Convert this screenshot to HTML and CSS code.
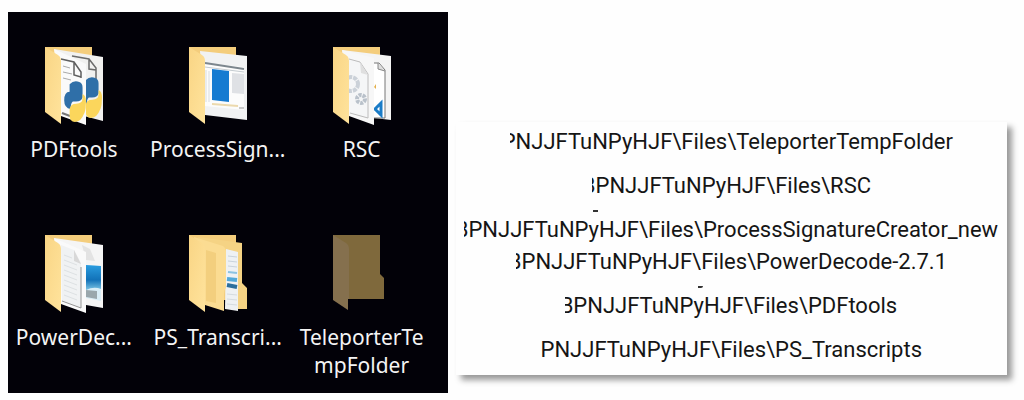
FILE: index.html
```
<!DOCTYPE html>
<html lang="en">
<head>
    <meta charset="UTF-8">
    <meta name="viewport" content="width=device-width, initial-scale=1">
    <title>Files</title>
    <link rel="stylesheet" href="styles.css">
</head>
<body>
    <!-- shared parts of the folder icons -->
    <svg class="defs" aria-hidden="true">
        <defs>
            <linearGradient id="gFlap" x1="0" y1="0" x2="1" y2="1">
                <stop offset="0" stop-color="#f9d585"/>
                <stop offset="1" stop-color="#ffe39c"/>
            </linearGradient>
            <linearGradient id="gSky" x1="0" y1="0" x2="0" y2="1">
                <stop offset="0" stop-color="#2a9de0"/>
                <stop offset="0.6" stop-color="#1272b8"/>
                <stop offset="1" stop-color="#7cc4e4"/>
            </linearGradient>
            <symbol id="back" viewBox="0 0 60 80">
                <path d="M1 1H48V66H1Z" fill="#f4cd7c"/>
            </symbol>
            <symbol id="flap" viewBox="0 0 60 80">
                <path d="M1 1L14 9Q17 11 17 15V78L1 66Z" fill="url(#gFlap)"/>
            </symbol>
            <symbol id="python" viewBox="0 0 20 38">
                <path d="M5 3Q9-1 14 1Q17 2 17 6V15Q16 19 11 19H8Q6 20 6 26Q0 25 0 18Q0 10 5 10Z" fill="#2f6fa8"/>
                <path d="M17 12Q21 14 20 22Q20 28 18 31Q16 37 10 38Q5 38 5 32V26Q6 21 11 21Q17 21 17 16Z" fill="#fbd65c"/>
            </symbol>
        </defs>
    </svg>
    <main class="stage">
        <ul class="desktop">
            <li class="item">
                <svg class="icon" viewBox="0 0 60 80" aria-hidden="true">
                    <use href="#back"/>
                    <path d="M10 3L59 11V75L40 70Z" fill="#f1f1f0"/>
                    <path d="M28 10L45 13L52 22V34M45 13V23L52 24" fill="none" stroke="#6b6b6b" stroke-width="1.5"/>
                    <use href="#python" x="36" y="31" width="22" height="41"/>
                    <path d="M10 3L42 18V79L17 70Z" fill="#fafafa"/>
                    <path d="M17 13L30 16L37 26V32M30 16V29L37 31" fill="none" stroke="#5f5f5f" stroke-width="1.5"/>
                    <path d="M19 20L26 22M19 26L28 28M19 32L27 34" stroke="#a9a9a9"/>
                    <path d="M18 67L26 70" stroke="#777" stroke-width="2"/>
                    <use href="#python" x="20" y="35" width="22" height="41"/>
                    <use href="#flap"/>
                </svg>
                <span class="name">PDFtools</span>
            </li>
            <li class="item">
                <svg class="icon" viewBox="0 0 60 80" aria-hidden="true">
                    <use href="#back"/>
                    <path d="M12 5L59 10V74L17 69Z" fill="#f1f2f3"/>
                    <path d="M17 17L56 21V64L17 60Z" fill="#fcfcfc"/>
                    <path d="M17 17L56 23" stroke="#7d878e" stroke-width="2"/>
                    <path d="M17 21L56 26" stroke="#c4cbd0"/>
                    <path d="M24 23L41 25V56L24 54Z" fill="#167bd1"/>
                    <path d="M44 27L56 28V48L44 47Z" fill="#dfe1e5"/>
                    <path d="M18 24V56M21 25V56" stroke="#d7dce0"/>
                    <path d="M24 58L50 60" stroke="#ecd9ad" stroke-width="2"/>
                    <path d="M51 62H56" stroke="#999"/>
                    <use href="#flap"/>
                </svg>
                <span class="name">ProcessSign...</span>
            </li>
            <li class="item">
                <svg class="icon" viewBox="0 0 60 80" aria-hidden="true">
                    <use href="#back"/>
                    <path d="M10 4L59 10V74L42 72Z" fill="#f4f4f4"/>
                    <path d="M42 17H47L53 24V72H42" fill="#fff" stroke="#777"/>
                    <path d="M46 17V23L53 25" fill="#ddd" stroke="#888"/>
                    <path d="M42 41L44 38V43Z" fill="#e3b04c"/>
                    <path d="M43 63L49 57V69Z" fill="none" stroke="#1a7cc7" stroke-width="3"/>
                    <path d="M10 4L42 12V79L17 70Z" fill="#f7f7f7"/>
                    <path d="M17 13L28 16L36 28V72L18 67" fill="#f5f6f7" stroke="#bcbcbc"/>
                    <path d="M28 16L29 27L36 29" fill="#dfdfdf"/>
                    <circle cx="19" cy="38" r="7" fill="none" stroke="#cbd1d8" stroke-width="4" stroke-dasharray="4 1"/>
                    <circle cx="29" cy="53" r="4" fill="none" stroke="#b9c1ca" stroke-width="4" stroke-dasharray="3 1"/>
                    <use href="#flap"/>
                </svg>
                <span class="name">RSC</span>
            </li>
            <li class="item">
                <svg class="icon" viewBox="0 0 60 80" aria-hidden="true">
                    <use href="#back"/>
                    <path d="M10 4L59 11V74L42 71Z" fill="#f5f5f5"/>
                    <path d="M38 11L46 15L51 27L42 26Z" fill="#e3e3e3"/>
                    <path d="M42 31L57 32V67L42 64Z" fill="#d9edf6"/>
                    <path d="M42 31L57 32V55Q50 52 42 56Z" fill="url(#gSky)"/>
                    <path d="M42 56L53 57V65L42 63Z" fill="#9aa7ac"/>
                    <path d="M10 4L42 18V79L17 70Z" fill="#fafafa"/>
                    <path d="M17 11L30 16L37 29V74L18 67Z" fill="#f0f2f3"/>
                    <path d="M18 67L37 74V33" fill="none" stroke="#969696"/>
                    <path d="M30 16V27L37 30" fill="#d8d8d8"/>
                    <path d="M20 21L28 24M20 26L33 31M20 31L33 36M20 36L33 41M20 41L33 46M20 46L33 51M20 51L33 56M20 56L33 61M20 61L33 66" stroke="#dde1e3"/>
                    <use href="#flap"/>
                </svg>
                <span class="name">PowerDec...</span>
            </li>
            <li class="item">
                <svg class="icon" viewBox="0 0 60 80" aria-hidden="true">
                    <use href="#back"/>
                    <path d="M10 3L54 9V49L59 54V75H44Z" fill="#f5d384"/>
                    <path d="M38 15L50 18V77L37 75Z" fill="#eef1f3"/>
                    <path d="M40 22L49 23M40 27L49 28M40 32L49 33" stroke="#c9d3db"/>
                    <path d="M40 38L49 39" stroke="#8bc3e2" stroke-width="2"/>
                    <path d="M39 45L49 46" stroke="#53a9d8" stroke-width="4"/>
                    <path d="M39 51L49 53" stroke="#2c6f9c" stroke-width="4"/>
                    <path d="M39 60L49 61M39 65L49 66M39 70L49 71" stroke="#d5dbdf"/>
                    <path d="M6 3L35 12Q38 14 38 18V54L36 57V77L17 71Z" fill="#fbdc92"/>
                    <path d="M18 16L28 19V69L18 67Z" fill="#f3cf7e"/>
                    <use href="#flap"/>
                </svg>
                <span class="name">PS_Transcri...</span>
            </li>
            <li class="item">
                <svg class="icon" viewBox="0 0 60 80" aria-hidden="true">
                    <path d="M1 1H48V40L52 44V65H16L1 60Z" fill="#7f693c"/>
                    <path d="M1 1L14 9Q17 11 17 15V65H16V76L1 66Z" fill="#85704e"/>
                </svg>
                <span class="name full">TeleporterTempFolder</span>
            </li>
        </ul>
        <section class="paths">
            <p class="path"><span class="cut">P</span>NJJFTuNPyHJF\Files\TeleporterTempFolder</p>
            <p class="path"><span class="cut thin">B</span>PNJJFTuNPyHJF\Files\RSC</p>
            <p class="path"><i class="speck"></i><span class="cut thin">B</span>PNJJFTuNPyHJF\Files\ProcessSignatureCreator_new</p>
            <p class="path tight"><span class="cut">B</span>PNJJFTuNPyHJF\Files\PowerDecode-2.7.1</p>
            <p class="path"><i class="speck tail"></i><span class="cut wide">B</span>PNJJFTuNPyHJF\Files\PDFtools</p>
            <p class="path">PNJJFTuNPyHJF\Files\PS_Transcripts</p>
        </section>
    </main>
</body>
</html>
```
FILE: styles.css
```
*{
    box-sizing: border-box;
}
body{
    margin: 0;
    background: #fefefe;
}
.defs{
    position: absolute;
    width: 0;
    height: 0;
}
.stage{
    display: flex;
    gap: 8px;
    padding: 12px 17px 7px 8px;
}
.desktop{
    flex: 0 0 44%;
    display: grid;
    grid-template-columns: repeat(3, minmax(0, 1fr));
    gap: 71px 12px;
    margin: 0;
    padding: 34px 20px 14px 0;
    list-style: none;
    background: #020108;
}
.item{
    display: flex;
    flex-direction: column;
    align-items: center;
    gap: 9px;
}
.icon{
    width: 60px;
    height: 80px;
}
.name{
    text-align: center;
    white-space: nowrap;
    color: #f4f4f4;
    font: 21px/28px "Noto Sans", "Open Sans", sans-serif;
}
.full{
    max-width: 124px;
    white-space: normal;
    overflow-wrap: anywhere;
}
.paths{
    flex: 1;
    min-width: 0;
    align-self: flex-end;
    display: flex;
    flex-direction: column;
    align-items: center;
    gap: 16px;
    margin-bottom: 18px;
    padding: 6px 0 11px;
    background: #fefefe;
    box-shadow: 5px 5px 6px #999;
}
.path{
    position: relative;
    display: flex;
    margin: 0;
    white-space: nowrap;
    color: #151515;
    font: 22px/28px Roboto, "Liberation Sans", sans-serif;
}
.tight{
    margin-top: -12px;
}
/* first letter with its left side cut off */
.cut{
    display: flex;
    justify-content: flex-end;
    width: 6px;
    overflow: hidden;
}
.thin{
    width: 4px;
}
.wide{
    width: 8px;
}
/* leftovers of the text between the rows */
.speck{
    position: absolute;
    top: -6px;
    left: 24%;
    width: 5px;
    height: 2px;
    background: #333;
}
.tail{
    left: 40%;
    border-radius: 0 0 4px 0;
}
```
